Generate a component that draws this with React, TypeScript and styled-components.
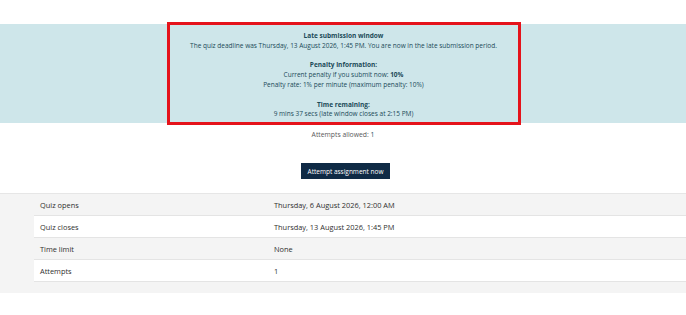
import styled, { createGlobalStyle } from 'styled-components'

const GlobalStyle = createGlobalStyle`
  html, body {
    margin: 0;
    padding: 0;
    background: #ffffff;
    font-family: 'Open Sans', 'Noto Sans', sans-serif;
  }
`

const rows = [
  { label: 'Quiz opens', value: 'Thursday, 6 August 2026, 12:00 AM' },
  { label: 'Quiz closes', value: 'Thursday, 13 August 2026, 1:45 PM' },
  { label: 'Time limit', value: 'None' },
  { label: 'Attempts', value: '1' },
]

export default function App() {
  return (
    <>
      <GlobalStyle />
      <Page>
        <Banner>
          <Notice>
            <Block>
              <Title>Late submission window</Title>
              <Line>
                The quiz deadline was Thursday, 13 August 2026, 1:45 PM. You are now in the
                late submission period.
              </Line>
            </Block>
            <Block>
              <Title>Penalty information:</Title>
              <Line>
                Current penalty if you submit now: <strong>10%</strong>
              </Line>
              <Line>Penalty rate: 1% per minute (maximum penalty: 10%)</Line>
            </Block>
            <Block>
              <Title>Time remaining:</Title>
              <Line>9 mins 37 secs (late window closes at 2:15 PM)</Line>
            </Block>
          </Notice>
        </Banner>

        <Allowed>
          Attempts allowed: <AllowedCount>1</AllowedCount>
        </Allowed>

        <Actions>
          <AttemptButton type="button">Attempt assignment now</AttemptButton>
        </Actions>

        <Summary>
          <Table>
            {rows.map((row, i) => (
              <Row key={row.label} $striped={i % 2 === 0}>
                <Label>{row.label}</Label>
                <Value>{row.value}</Value>
              </Row>
            ))}
          </Table>
        </Summary>
      </Page>
    </>
  )
}

const Page = styled.div`
  padding-top: 24px;
  width: 686px;
`

const Banner = styled.div`
  background: #cee6ea;
  height: 99px;
  display: flex;
  justify-content: center;
`

const Notice = styled.div`
  box-sizing: border-box;
  width: 354px;
  margin: -2px 0 -2px 1px;
  border: 3px solid #e5131b;
  padding: 6px 4px 0;
  display: flex;
  flex-direction: column;
  gap: 9.5px;
  text-align: center;
  color: #1b4a58;
  font-size: 6.5px;
  line-height: 9.9px;
`

const Block = styled.div`
  display: flex;
  flex-direction: column;
`

const Title = styled.div`
  font-weight: 700;
`

const Line = styled.div`
  strong {
    font-weight: 700;
  }
`

const Allowed = styled.div`
  margin-top: 7px;
  text-align: center;
  font-size: 6.8px;
  line-height: 10px;
  color: #5a5a5a;
`

const AllowedCount = styled.span`
  color: #1d4e5c;
`

const Actions = styled.div`
  display: flex;
  justify-content: center;
  margin-top: 23px;
`

const AttemptButton = styled.button`
  width: 89px;
  height: 16px;
  margin-left: 5px;
  padding: 0;
  border: none;
  background: #0f2a45;
  color: #ffffff;
  font-family: 'Open Sans', 'Noto Sans', sans-serif;
  font-size: 6.5px;
`

const Summary = styled.div`
  margin-top: 14px;
  background: #f4f4f4;
  border-top: 1px solid #e6e6e6;
  padding: 0 0 11px 34px;
`

const Table = styled.div`
  display: flex;
  flex-direction: column;
`

const Row = styled.div<{ $striped: boolean }>`
  display: grid;
  grid-template-columns: 234px 1fr;
  align-items: center;
  height: 21px;
  padding-left: 6px;
  background: ${({ $striped }) => ($striped ? '#f4f4f4' : '#ffffff')};
  border-bottom: 1px solid #e4e4e4;
  font-size: 7.4px;
  color: #2f2f2f;
`

const Label = styled.div``

const Value = styled.div``
